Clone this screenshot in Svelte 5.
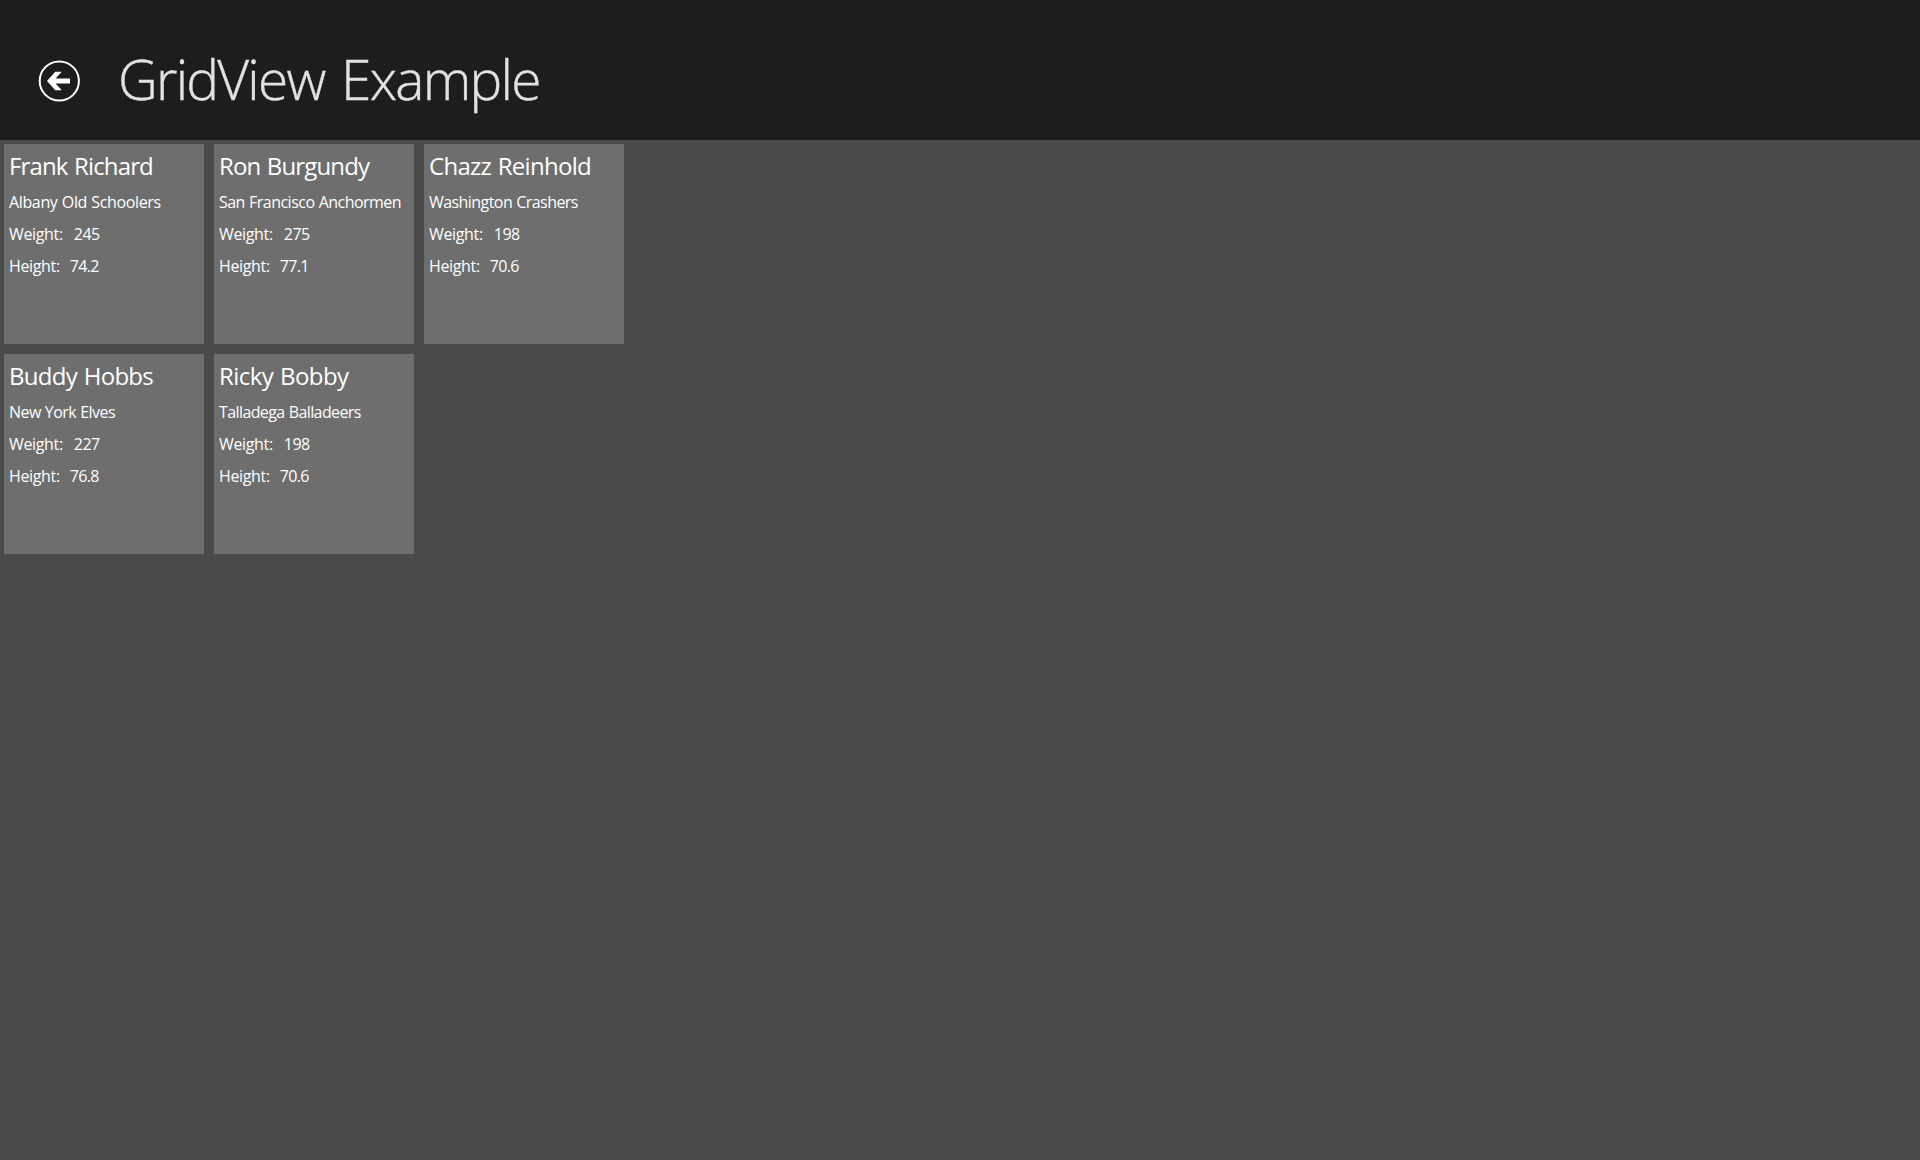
<script>
  // nameTrack / teamTrack: letter tracking in px for each line
  const players = [
    { name: 'Frank Richard', nameTrack: -0.85, team: 'Albany Old Schoolers', teamTrack: -0.36, weight: '245', height: '74.2' },
    { name: 'Buddy Hobbs', nameTrack: -0.7, team: 'New York Elves', teamTrack: -0.56, weight: '227', height: '76.8' },
    { name: 'Ron Burgundy', nameTrack: -0.85, team: 'San Francisco Anchormen', teamTrack: -0.52, weight: '275', height: '77.1' },
    { name: 'Ricky Bobby', nameTrack: -0.55, team: 'Talladega Balladeers', teamTrack: -0.6, weight: '198', height: '70.6' },
    { name: 'Chazz Reinhold', nameTrack: -0.7, team: 'Washington Crashers', teamTrack: -0.56, weight: '198', height: '70.6' }
  ];
</script>

<div class="page">
  <header>
    <button class="back" aria-label="Back">
      <svg width="42" height="42" viewBox="0 0 42 42">
        <circle cx="20.3" cy="21" r="19.6" fill="none" stroke="#fff" stroke-width="2" />
        <path d="M8 21 16.2 11.8H22.8L16.6 18.4H31V23.6H16.6L22.8 30.2H16.2Z" fill="#fff" />
      </svg>
    </button>
    <h1>GridView Example</h1>
  </header>
  <main>
    {#each players as p}
      <article>
        <h2 style:letter-spacing="{p.nameTrack}px">{p.name}</h2>
        <p style:letter-spacing="{p.teamTrack}px">{p.team}</p>
        <p><span class="label">Weight:</span><span class="weight">{p.weight}</span></p>
        <p><span class="label">Height:</span><span class="height">{p.height}</span></p>
      </article>
    {/each}
  </main>
</div>

<style>
  :global(body) { margin: 0; }
  .page {
    width: 1920px;
    height: 1160px;
    display: flex;
    flex-direction: column;
    overflow: hidden;
    background: #4a4a4a;
    color: #fff;
    font-family: 'Open Sans', 'Noto Sans', sans-serif;
  }
  header {
    height: 140px;
    flex: none;
    box-sizing: border-box;
    padding: 60px 0 0 39px;
    display: flex;
    align-items: flex-start;
    background: #1d1d1d;
  }
  .back {
    width: 42px;
    height: 42px;
    padding: 0;
    border: 0;
    margin-right: 37px;
    background: none;
  }
  .back svg { display: block; overflow: visible; }
  h1 {
    margin: -19px 0 0;
    font-size: 55px;
    line-height: 76px;
    font-weight: 300;
    letter-spacing: -1.75px;
    word-spacing: 4px;
    color: #e2e2e2;
    -webkit-text-stroke: 0.4px #e2e2e2;
    white-space: nowrap;
  }
  main {
    display: grid;
    grid-auto-flow: column;
    grid-template-rows: repeat(2, 200px);
    grid-auto-columns: 200px;
    gap: 10px;
    padding: 4px;
  }
  article {
    box-sizing: border-box;
    padding: 5px;
    background: #6e6e6e;
    white-space: nowrap;
  }
  h2 {
    margin: 0 0 3px;
    font-size: 24px;
    line-height: 34px;
    font-weight: 400;
    word-spacing: 1px;
  }
  p {
    margin: 0;
    display: flex;
    font-size: 16px;
    line-height: 32px;
    word-spacing: 0.5px;
  }
  .label { margin-right: 10px; letter-spacing: -0.35px; }
  .weight { margin-left: 1px; letter-spacing: -0.5px; }
  .height { letter-spacing: -0.7px; }
</style>
